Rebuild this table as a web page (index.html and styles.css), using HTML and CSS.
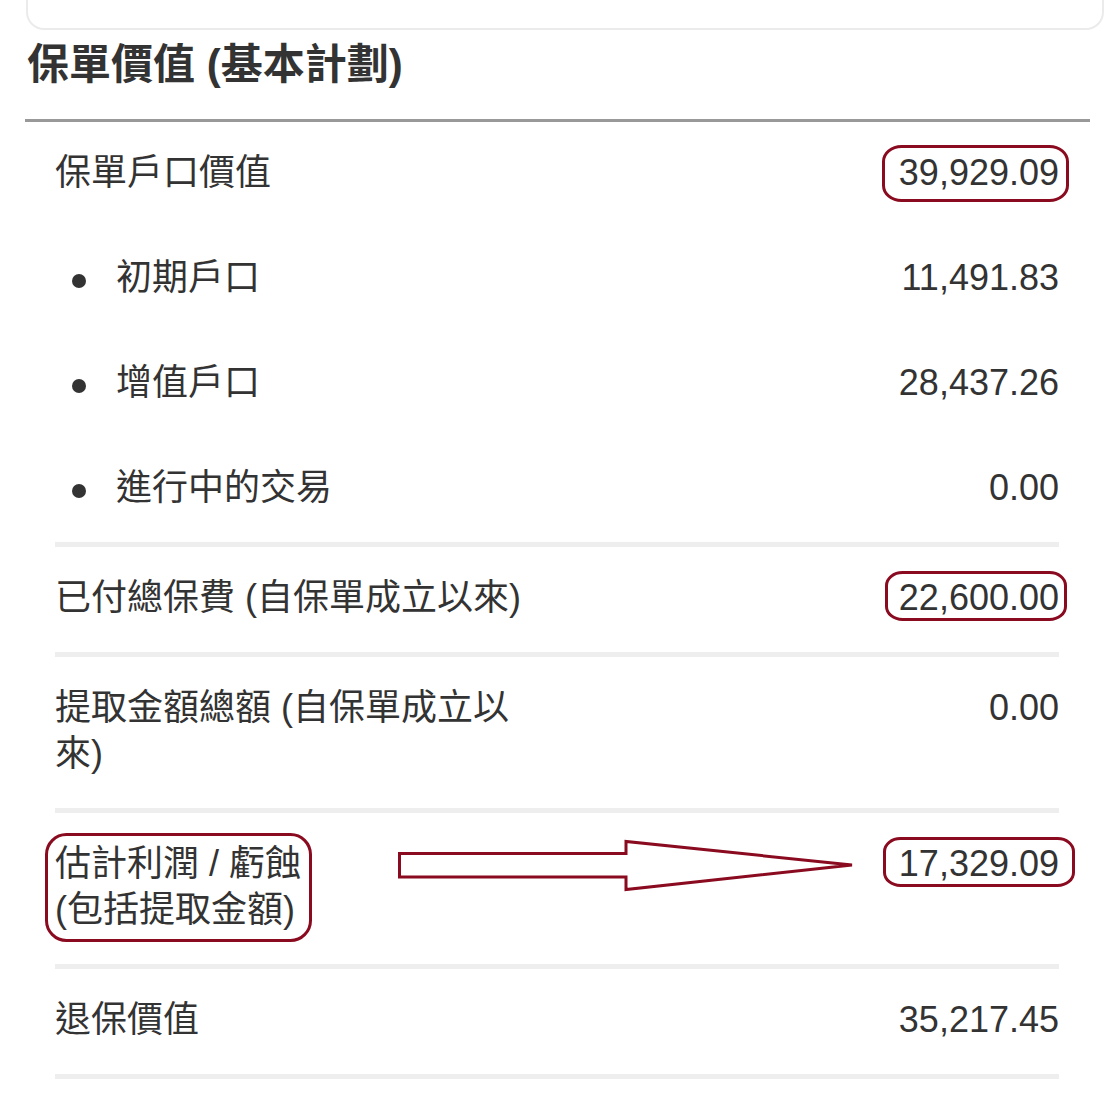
FILE: index.html
```html
<!DOCTYPE html>
<html lang="zh-Hant">
<head>
<meta charset="utf-8">
<title>保單價值</title>
<link rel="stylesheet" href="styles.css">
</head>
<body>
<div class="page">
  <div class="card"></div>
  <h2 class="title">保單價值 (基本計劃)</h2>
  <div class="table">
    <div class="rows">
      <div class="group sep">
        <div class="row"><span class="label">保單戶口價值</span><span class="value">39,929.09</span></div>
        <div class="row sub"><span class="label"><span class="dot"></span>初期戶口</span><span class="value">11,491.83</span></div>
        <div class="row sub"><span class="label"><span class="dot"></span>增值戶口</span><span class="value">28,437.26</span></div>
        <div class="row sub"><span class="label"><span class="dot"></span>進行中的交易</span><span class="value">0.00</span></div>
      </div>
      <div class="row sep"><span class="label">已付總保費 (自保單成立以來)</span><span class="value">22,600.00</span></div>
      <div class="row sep"><span class="label">提取金額總額 (自保單成立以來)</span><span class="value">0.00</span></div>
      <div class="row sep"><span class="label">估計利潤 / 虧蝕 <span class="keep">(包括提取金額)</span></span><span class="value">17,329.09</span></div>
      <div class="row sep"><span class="label">退保價值</span><span class="value">35,217.45</span></div>
    </div>
  </div>
  <svg class="marks" width="1117" height="1109" viewBox="0 0 1117 1109" aria-hidden="true">
    <g fill="none" stroke="#8a0a1f" stroke-width="3" stroke-linejoin="miter">
      <rect x="883.5" y="146.5" width="184" height="54" rx="18" ry="15"/>
      <rect x="886.5" y="572.5" width="179" height="47" rx="16" ry="13"/>
      <rect x="884.5" y="838.5" width="189" height="47" rx="16" ry="13"/>
      <rect x="46.5" y="834.5" width="264" height="106" rx="20" ry="20"/>
      <polygon points="399.5,853.5 626,853.5 626,841.5 852,865 626,889.5 626,877 399.5,877"/>
    </g>
  </svg>
</div>
</body>
</html>
```
FILE: styles.css
```css
html, body {
  margin: 0;
  padding: 0;
  background: #ffffff;
}

body {
  font-family: "Liberation Sans", "Noto Sans CJK TC", "Noto Sans", sans-serif;
  color: #333333;
}

.page {
  position: relative;
  width: 1117px;
  height: 1109px;
  overflow: hidden;
}

.card {
  height: 28px;
  margin: 0 13px 0 26px;
  border: 2px solid #ebebeb;
  border-top: none;
  border-radius: 0 0 18px 18px;
  background: #ffffff;
}

.title {
  margin: 10px 0 0 27px;
  font-size: 42px;
  font-weight: 700;
  line-height: 50px;
  color: #333333;
}

.table {
  margin: 29px 27px 0 25px;
  border-top: 3px solid #999999;
}

.rows {
  padding: 0 31px 0 30px;
}

.row {
  display: flex;
  justify-content: space-between;
  align-items: flex-start;
  padding: 28px 0 31px;
  font-size: 36px;
  line-height: 46px;
}

.sep {
  border-bottom: 5px solid #eeeeee;
}

.group .row {
  border-bottom: none;
}

.label {
  max-width: 475px;
}

.keep {
  white-space: nowrap;
}

.sub .label {
  display: flex;
  align-items: center;
}

.dot {
  width: 14px;
  height: 14px;
  border-radius: 50%;
  background: #333333;
  margin: 6px 30px 0 17px;
  flex: none;
}

.value {
  text-align: right;
  white-space: nowrap;
}

.marks {
  position: absolute;
  left: 0;
  top: 0;
  pointer-events: none;
}
```
